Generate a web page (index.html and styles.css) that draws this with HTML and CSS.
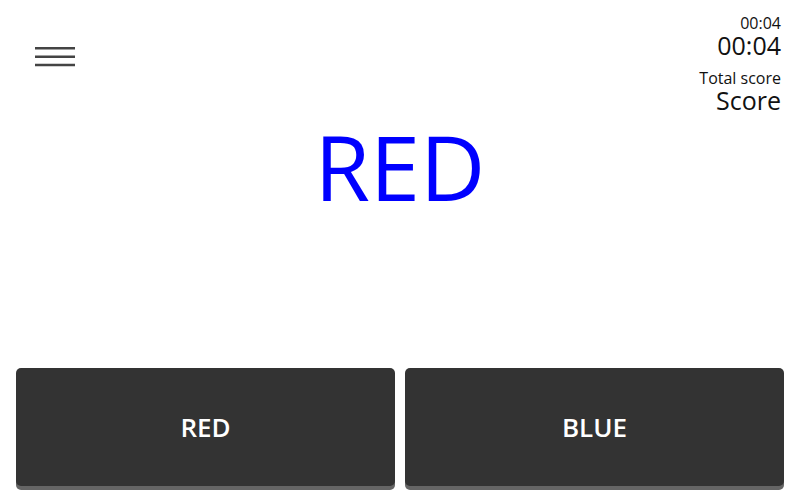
FILE: index.html
```html
<!DOCTYPE html>
<html>
<head>
<meta charset="utf-8">
<link rel="stylesheet" href="styles.css">
</head>
<body>
<div class="app">
  <header class="top">
    <button class="menu" aria-label="Menu">
      <svg width="40" height="22" viewBox="0 0 40 22">
        <path d="M0 2.3H40M0 10.7H40M0 19H40" stroke="#444" stroke-width="2.6" fill="none"/>
      </svg>
    </button>
    <div class="stats">
      <div class="stat">
        <div class="label">00:04</div>
        <div class="value">00:04</div>
      </div>
      <div class="stat">
        <div class="label">Total score</div>
        <div class="value">Score</div>
      </div>
    </div>
  </header>
  <div class="word">RED</div>
  <div class="answers">
    <button class="answer">RED</button>
    <button class="answer">BLUE</button>
  </div>
</div>
</body>
</html>
```
FILE: styles.css
```css
html, body {
  margin: 0;
  padding: 0;
  background: #fff;
}
body {
  font-family: "Open Sans", "Noto Sans", sans-serif;
  color: #111;
}
.app {
  height: 500px;
  display: flex;
  flex-direction: column;
}
.top {
  display: flex;
  justify-content: space-between;
  align-items: flex-start;
  padding: 15px 19px 0 35px;
}
.menu {
  margin: 31px 0 0 0;
  padding: 0;
  border: 0;
  background: none;
  display: block;
  line-height: 0;
}
.stats {
  display: flex;
  flex-direction: column;
  gap: 11px;
  text-align: right;
}
.label {
  font-size: 16px;
  line-height: 17px;
}
.value {
  font-size: 25px;
  line-height: 27px;
}
.word {
  margin-top: 7px;
  text-align: center;
  font-size: 90px;
  line-height: 90px;
  color: #0000ff;
}
.answers {
  margin-top: auto;
  margin-bottom: 14px;
  display: flex;
  gap: 10px;
  padding: 0 16px;
}
.answer {
  flex: 1;
  height: 118px;
  border: 0;
  border-radius: 5px;
  background: #333333;
  box-shadow: 0 4px 0 #656565;
  color: #fff;
  font-family: "Open Sans", "Noto Sans", sans-serif;
  font-size: 26px;
  font-weight: 600;
  padding: 0;
}
```
